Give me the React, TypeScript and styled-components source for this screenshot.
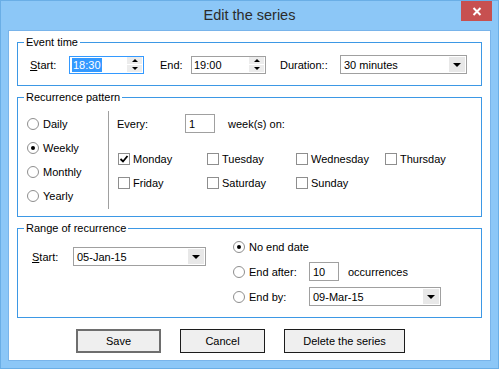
import styled, { createGlobalStyle } from 'styled-components';

const GlobalStyle = createGlobalStyle`
  body {
    margin: 0;
    background: #fff;
    font-family: "Liberation Sans", Arial, sans-serif;
    font-size: 11px;
    color: #000;
  }
`;

const Window = styled.div`
  width: 499px;
  height: 369px;
  box-sizing: border-box;
  background: #8cc7f7;
  border: 1px solid #6aaee6;
  display: flex;
  flex-direction: column;
`;

const TitleBar = styled.div`
  height: 29px;
  flex: none;
  display: grid;
  grid-template-columns: 1fr auto 1fr;
  align-items: start;
`;

const Title = styled.div`
  grid-column: 2;
  line-height: 29px;
  font-size: 14.5px;
  color: #2b2b2b;
`;

const CloseButton = styled.div`
  grid-column: 3;
  justify-self: end;
  width: 31px;
  height: 20px;
  margin-right: 6px;
  background: #c75050;
  display: flex;
  align-items: center;
  justify-content: center;
`;

const Client = styled.div`
  flex: 1;
  margin: 0 7px 7px;
  background: #fff;
  border: 1px solid #79b4ea;
  padding: 11px 0 0 8px;
`;

const Group = styled.div<{ $h: number; $gap?: number }>`
  position: relative;
  box-sizing: border-box;
  width: 465px;
  height: ${({ $h }) => $h}px;
  margin-top: ${({ $gap = 0 }) => $gap}px;
  border: 1px solid #3d98e5;
`;

const Legend = styled.span`
  position: absolute;
  top: -7px;
  left: 6px;
  padding: 0 2px;
  background: #fff;
  line-height: 13px;
`;

const Row = styled.div<{ $pad?: string }>`
  display: flex;
  align-items: center;
  height: 19px;
  padding: ${({ $pad = '0' }) => $pad};
`;

const Label = styled.span<{ $w: number }>`
  width: ${({ $w }) => $w}px;
  flex: none;
`;

const SpinBox = styled.div<{ $focused?: boolean }>`
  width: 75px;
  height: 18px;
  box-sizing: border-box;
  border: 1px solid ${({ $focused }) => ($focused ? '#3399ff' : '#a0a0a0')};
  display: flex;
  align-items: center;
  padding-left: 2px;
`;

const Selected = styled.span`
  background: #3399ff;
  color: #fff;
  line-height: 14px;
  padding: 0 1px;
`;

const SpinButtons = styled.div`
  margin-left: auto;
  margin-right: 1px;
  display: flex;
  flex-direction: column;
  gap: 1px;
`;

const SpinArrow = styled.div`
  width: 15px;
  height: 7px;
  background: #ececec;
  display: flex;
  align-items: center;
  justify-content: center;
`;

const Tri = styled.span<{ $up?: boolean; $size?: number }>`
  width: 0;
  height: 0;
  border-left: ${({ $size = 3.5 }) => $size}px solid transparent;
  border-right: ${({ $size = 3.5 }) => $size}px solid transparent;
  ${({ $up, $size = 3.5 }) =>
    $up
      ? `border-bottom: ${$size}px solid #000;`
      : `border-top: ${$size}px solid #000;`}
`;

const Dropdown = styled.div<{ $w: number }>`
  width: ${({ $w }) => $w}px;
  height: 19px;
  box-sizing: border-box;
  border: 1px solid #a0a0a0;
  display: flex;
  align-items: center;
  padding-left: 3px;
  flex: none;
`;

const DropArrow = styled.div`
  margin-left: auto;
  margin-right: 1px;
  width: 16px;
  height: 15px;
  background: #e8e8e8;
  display: flex;
  align-items: center;
  justify-content: center;
`;

const NumBox = styled.div`
  width: 30px;
  height: 19px;
  box-sizing: border-box;
  border: 1px solid #a0a0a0;
  padding-left: 3px;
  display: flex;
  align-items: center;
  flex: none;
`;

const PatternBody = styled.div`
  display: flex;
  height: 100%;
`;

const RadioCol = styled.div`
  width: 90px;
  box-sizing: border-box;
  padding: 14px 0 0 9px;
  display: flex;
  flex-direction: column;
`;

const RadioRow = styled.label<{ $h?: number; $w?: number }>`
  height: ${({ $h = 24 }) => $h}px;
  ${({ $w }) => ($w ? `width: ${$w}px; flex: none;` : '')}
  display: flex;
  align-items: center;
  gap: 4px;
`;

const Circle = styled.span<{ $on?: boolean }>`
  width: 12px;
  height: 12px;
  box-sizing: border-box;
  border-radius: 50%;
  border: 1px solid #8e8e8e;
  background: #fff;
  display: flex;
  align-items: center;
  justify-content: center;
  flex: none;
  &::after {
    content: '';
    width: 4px;
    height: 4px;
    border-radius: 50%;
    background: ${({ $on }) => ($on ? '#000' : 'transparent')};
  }
`;

const Separator = styled.div`
  width: 1px;
  background: #a0a0a0;
  margin: 13px 0 7px;
`;

const DaysCol = styled.div`
  padding: 16px 0 0 8px;
`;

const DayGrid = styled.div`
  margin-top: 14px;
  padding-left: 1px;
  display: grid;
  grid-template-columns: repeat(4, 89px);
  grid-auto-rows: 24px;
  align-items: center;
`;

const CheckItem = styled.label`
  display: flex;
  align-items: center;
  gap: 3px;
`;

const Box = styled.span`
  width: 12px;
  height: 12px;
  box-sizing: border-box;
  border: 1px solid #8e8e8e;
  background: #fff;
  display: flex;
  align-items: center;
  justify-content: center;
`;

const RangeBody = styled.div`
  display: flex;
`;

const RangeLeft = styled.div`
  padding: 18px 0 0 14px;
`;

const RangeRight = styled.div`
  margin-left: 27px;
  padding-top: 8px;
  display: flex;
  flex-direction: column;
  gap: 6px;
`;

const Buttons = styled.div`
  display: flex;
  gap: 19px;
  margin-top: 11px;
  padding-left: 59px;
`;

const Button = styled.div<{ $w: number; $default?: boolean }>`
  width: ${({ $w }) => $w}px;
  height: 24px;
  box-sizing: border-box;
  background: #efefef;
  border: ${({ $default }) => ($default ? '2px solid #6e6e6e' : '1px solid #1c1c1c')};
  display: flex;
  align-items: center;
  justify-content: center;
`;

const days = [
  { name: 'Monday', on: true },
  { name: 'Tuesday' },
  { name: 'Wednesday' },
  { name: 'Thursday' },
  { name: 'Friday' },
  { name: 'Saturday' },
  { name: 'Sunday' },
];

const patterns = ['Daily', 'Weekly', 'Monthly', 'Yearly'];

const Check = () => (
  <svg width="10" height="10" viewBox="0 0 10 10">
    <path d="M1.5 5 L4 7.5 L8.5 2" fill="none" stroke="#000" strokeWidth="1.8" />
  </svg>
);

const Spin = ({ value, focused }: { value: string; focused?: boolean }) => (
  <SpinBox $focused={focused}>
    {focused ? <Selected>{value}</Selected> : <span>{value}</span>}
    <SpinButtons>
      <SpinArrow>
        <Tri $up $size={3.5} />
      </SpinArrow>
      <SpinArrow>
        <Tri $size={3.5} />
      </SpinArrow>
    </SpinButtons>
  </SpinBox>
);

const Combo = ({ value, w }: { value: string; w: number }) => (
  <Dropdown $w={w}>
    {value}
    <DropArrow>
      <Tri $size={4} />
    </DropArrow>
  </Dropdown>
);

export default function App() {
  return (
    <>
      <GlobalStyle />
      <Window>
        <TitleBar>
          <Title>Edit the series</Title>
          <CloseButton>
            <svg width="10" height="9" viewBox="0 0 10 9">
              <path d="M1.5 1 L8.5 8 M8.5 1 L1.5 8" stroke="#fff" strokeWidth="2" />
            </svg>
          </CloseButton>
        </TitleBar>
        <Client>
          <Group $h={44}>
            <Legend>Event time</Legend>
            <Row $pad="12px 0 0 12px">
              <Label $w={39}>
                <u>S</u>tart:
              </Label>
              <Spin value="18:30" focused />
              <Label $w={31} style={{ marginLeft: 16 }}>
                End:
              </Label>
              <Spin value="19:00" />
              <Label $w={60} style={{ marginLeft: 14 }}>
                Duration::
              </Label>
              <Combo value="30 minutes" w={127} />
            </Row>
          </Group>

          <Group $h={120} $gap={11}>
            <Legend>Recurrence pattern</Legend>
            <PatternBody>
              <RadioCol>
                {patterns.map((p) => (
                  <RadioRow key={p}>
                    <Circle $on={p === 'Weekly'} />
                    {p}
                  </RadioRow>
                ))}
              </RadioCol>
              <Separator />
              <DaysCol>
                <Row>
                  <Label $w={68}>Every:</Label>
                  <NumBox>1</NumBox>
                  <span style={{ marginLeft: 13 }}>week(s) on:</span>
                </Row>
                <DayGrid>
                  {days.map((d) => (
                    <CheckItem key={d.name}>
                      <Box>{d.on && <Check />}</Box>
                      {d.name}
                    </CheckItem>
                  ))}
                </DayGrid>
              </DaysCol>
            </PatternBody>
          </Group>

          <Group $h={90} $gap={11}>
            <Legend>Range of recurrence</Legend>
            <RangeBody>
              <RangeLeft>
                <Row>
                  <Label $w={41}>
                    <u>S</u>tart:
                  </Label>
                  <Combo value="05-Jan-15" w={133} />
                </Row>
              </RangeLeft>
              <RangeRight>
                <RadioRow $h={19}>
                  <Circle $on />
                  No end date
                </RadioRow>
                <Row>
                  <RadioRow $h={19} $w={76}>
                    <Circle />
                    End after:
                  </RadioRow>
                  <NumBox>10</NumBox>
                  <span style={{ marginLeft: 9 }}>occurrences</span>
                </Row>
                <Row>
                  <RadioRow $h={19} $w={76}>
                    <Circle />
                    End by:
                  </RadioRow>
                  <Combo value="09-Mar-15" w={132} />
                </Row>
              </RangeRight>
            </RangeBody>
          </Group>

          <Buttons>
            <Button $w={85} $default>
              Save
            </Button>
            <Button $w={85}>Cancel</Button>
            <Button $w={121}>Delete the series</Button>
          </Buttons>
        </Client>
      </Window>
    </>
  );
}
